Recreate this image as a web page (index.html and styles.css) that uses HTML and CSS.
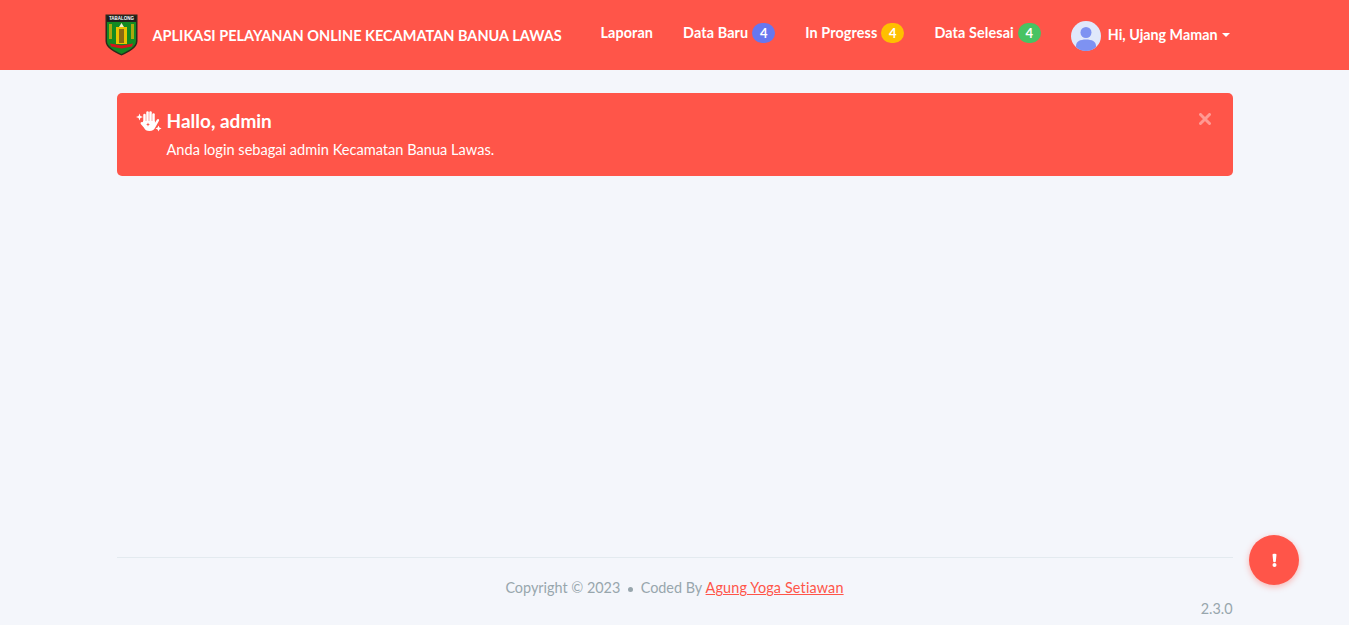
FILE: index.html
```html
<!DOCTYPE html>
<html lang="id">
<head>
  <meta charset="UTF-8">
  <title>Aplikasi Pelayanan Online Kecamatan Banua Lawas</title>
  <link rel="stylesheet" href="styles.css">
</head>
<body>

  <header class="navbar">
    <div class="navbar-inner">
      <a class="brand" href="#">
        <svg class="brand-logo" width="33" height="42" viewBox="0 0 33 42">
          <path d="M0.5 0.5H32.5V27C32.5 34 24 38 16.5 41.5C9 38 0.5 34 0.5 27Z" fill="#2a2a1c"/>
          <path d="M2 8H31V27C31 33 23.5 36.500 16.500 40C9.500 36.500 2 33 2 27Z" fill="#128a22"/>
          <rect x="2" y="2" width="29" height="5.5" fill="#1c1c1c"/>
          <text x="16.5" y="6.4" text-anchor="middle" class="logo-text">TABALONG</text>
          <rect x="11" y="13" width="11" height="17" fill="#e8c400"/>
          <rect x="14" y="15" width="5" height="14" fill="#8a6a12"/>
          <path d="M16.500 9L19 13H14Z" fill="#f4f0d0"/>
          <rect x="4" y="10" width="3" height="15" fill="#a8a810"/>
          <rect x="26" y="10" width="3" height="15" fill="#a8a810"/>
          <path d="M5 29.500L16.500 31.500L28 29.500L27 32.500L16.500 34.500L6 32.500Z" fill="#d8141c"/>
        </svg>
        <span>APLIKASI PELAYANAN ONLINE KECAMATAN BANUA LAWAS</span>
      </a>
      <nav class="nav">
        <a class="nav-link" href="#">Laporan</a>
        <a class="nav-link" href="#">Data Baru <span class="badge badge-blue">4</span></a>
        <a class="nav-link" href="#">In Progress <span class="badge badge-yellow">4</span></a>
        <a class="nav-link" href="#">Data Selesai <span class="badge badge-green">4</span></a>
        <a class="nav-user" href="#">
          <svg class="avatar" width="30" height="30" viewBox="0 0 30 30">
            <circle cx="15" cy="15" r="15" fill="#e0e8fb"/>
            <circle cx="15" cy="11.500" r="5.500" fill="#7e92f2"/>
            <path d="M5 26V25C5 20.500 9 18.500 15 18.500C21 18.500 25 20.500 25 25V26C22.500 28.500 19 30 15 30C11 30 7.500 28.500 5 26Z" fill="#7e92f2"/>
          </svg>
          <span class="user-name">Hi, Ujang Maman</span>
          <i class="caret"></i>
        </a>
      </nav>
    </div>
  </header>

  <main class="content">
    <div class="alert">
      <div class="alert-title">
        <svg class="alert-icon" width="26" height="24" viewBox="0 0 26 24">
          <g stroke="#fff" stroke-width="2.500" stroke-linecap="round">
            <line x1="8.500" y1="5" x2="8.500" y2="13"/>
            <line x1="11.500" y1="2.500" x2="11.500" y2="13"/>
            <line x1="14.500" y1="2.500" x2="14.500" y2="13"/>
            <line x1="17.500" y1="4.500" x2="17.500" y2="13"/>
          </g>
          <path d="M7.300 11H18.800V13L21 9.500C22 8.300 23.700 9.300 23 10.800L19.800 16.500C18.500 19.500 16.500 21 13.500 21C10.500 21 9 20 7.800 17.500L4.800 14C4 12.800 5.500 11.500 6.500 12.300Z" fill="#fff"/>
          <path d="M12 12.500L12.600 14L14 14.500L12.600 15L12 16.500L11.400 15L10 14.500L11.400 14Z" fill="#ff5549"/>
          <path d="M3.500 3.500L4.400 6.100L7 7L4.400 7.900L3.500 10.500L2.600 7.900L0 7L2.600 6.100Z" fill="#fff"/>
          <path d="M22.500 15.500L23.400 17.600L25.500 18.500L23.400 19.400L22.500 21.500L21.600 19.400L19.500 18.500L21.600 17.600Z" fill="#fff"/>
        </svg>
        <span class="alert-heading">Hallo, admin</span>
        <svg class="alert-close" width="12" height="12" viewBox="0 0 12 12">
          <path d="M1.500 1.500L10.500 10.500M10.500 1.500L1.500 10.500" stroke="#fff" stroke-width="3" stroke-linecap="round"/>
        </svg>
      </div>
      <p class="alert-text">Anda login sebagai admin Kecamatan Banua Lawas.</p>
    </div>
  </main>

  <footer class="footer">
    <div class="footer-main">
      Copyright &copy; 2023 <span class="dot"></span> Coded By <a href="#">Agung Yoga Setiawan</a>
    </div>
    <div class="version">2.3.0</div>
  </footer>

  <a class="fab" href="#">
    <svg width="5" height="14" viewBox="0 0 5 14">
      <path d="M0.500 1.500C0.500 0.500 4.500 0.500 4.500 1.500L3.800 8.500C3.700 9.500 1.300 9.500 1.200 8.500Z" fill="#fff"/>
      <circle cx="2.500" cy="12" r="2" fill="#fff"/>
    </svg>
  </a>

</body>
</html>
```

FILE: styles.css
```css
* {
  box-sizing: border-box;
}
body {
  font-family: Lato, "Noto Sans", sans-serif;
  background-color: #f4f6fb;
  color: #98a6ad;
  margin: 0;
  padding: 0;
  height: 625px;
  display: flex;
  flex-direction: column;
  overflow: hidden;
}
a {
  text-decoration: none;
  color: inherit;
}
.navbar {
  background-color: #ff5549;
  color: #fff;
  height: 70px;
  flex: none;
}
.navbar-inner {
  width: 1140px;
  height: 70px;
  margin: 0 auto;
  display: flex;
  align-items: center;
  justify-content: space-between;
}
.brand {
  display: flex;
  align-items: center;
  gap: 15px;
  font-size: 14.5px;
  font-weight: 700;
}
.brand-logo {
  flex: none;
}
.logo-text {
  font-family: "Liberation Sans", sans-serif;
  font-size: 4.5px;
  font-weight: 700;
  fill: #fff;
}
.nav {
  display: flex;
  align-items: center;
  margin-right: 15px;
}
.nav-link {
  font-size: 14.4px;
  font-weight: 700;
  letter-spacing: 0.1px;
  margin-left: 30px;
  margin-bottom: 6px;
  display: flex;
  align-items: center;
  gap: 4px;
}
.badge {
  display: inline-block;
  width: 23px;
  height: 20px;
  margin-top: 2px;
  line-height: 20px;
  text-align: center;
  border-radius: 10px;
  font-size: 13px;
  font-weight: 700;
  color: #fff;
}
.badge-blue {
  background-color: #6777ef;
}
.badge-yellow {
  background-color: #ffbf00;
}
.badge-green {
  background-color: #47c363;
}
.nav-user {
  display: flex;
  align-items: center;
  margin-left: 30px;
  margin-top: 2px;
  font-size: 14.3px;
  font-weight: 700;
}
.user-name {
  padding-bottom: 3px;
}
.avatar {
  margin-right: 7px;
}
.caret {
  margin-left: 4px;
  margin-bottom: 2px;
  border-top: 4px solid #fff;
  border-left: 4px solid transparent;
  border-right: 4px solid transparent;
}
.content {
  flex: 1;
  width: 1116px;
  margin: 23px auto 0 auto;
}
.alert {
  background-color: #ff5549;
  color: #fff;
  height: 83px;
  border-radius: 5px;
  padding: 16px 22px 0 19px;
}
.alert-title {
  display: flex;
  align-items: center;
  gap: 5px;
  font-size: 19px;
  font-weight: 700;
}
.alert-heading {
  padding-bottom: 2px;
}
.alert-close {
  margin-left: auto;
  margin-top: -6px;
  opacity: 0.4;
}
.alert-text {
  margin: 7px 0 0 31px;
  font-size: 14.6px;
}
.footer {
  width: 1116px;
  margin: 0 auto;
  flex: none;
  height: 68px;
  border-top: 1px solid #e3eaef;
  font-size: 14.4px;
}
.footer-main {
  text-align: center;
  margin-top: 21.3px;
}
.footer-main a {
  color: #ff5549;
  text-decoration: underline;
  letter-spacing: 0.15px;
}
.dot {
  display: inline-block;
  width: 5px;
  height: 5px;
  border-radius: 50%;
  background-color: #98a6ad;
  margin: 0 4px;
  vertical-align: 1px;
}
.version {
  text-align: right;
  margin-top: 4px;
}
.fab {
  position: fixed;
  right: 50px;
  bottom: 40px;
  width: 50px;
  height: 50px;
  border-radius: 50%;
  background-color: #ff5549;
  display: flex;
  align-items: center;
  justify-content: center;
  box-shadow: 0 2px 6px rgba(255, 85, 73, 0.4);
}
```
